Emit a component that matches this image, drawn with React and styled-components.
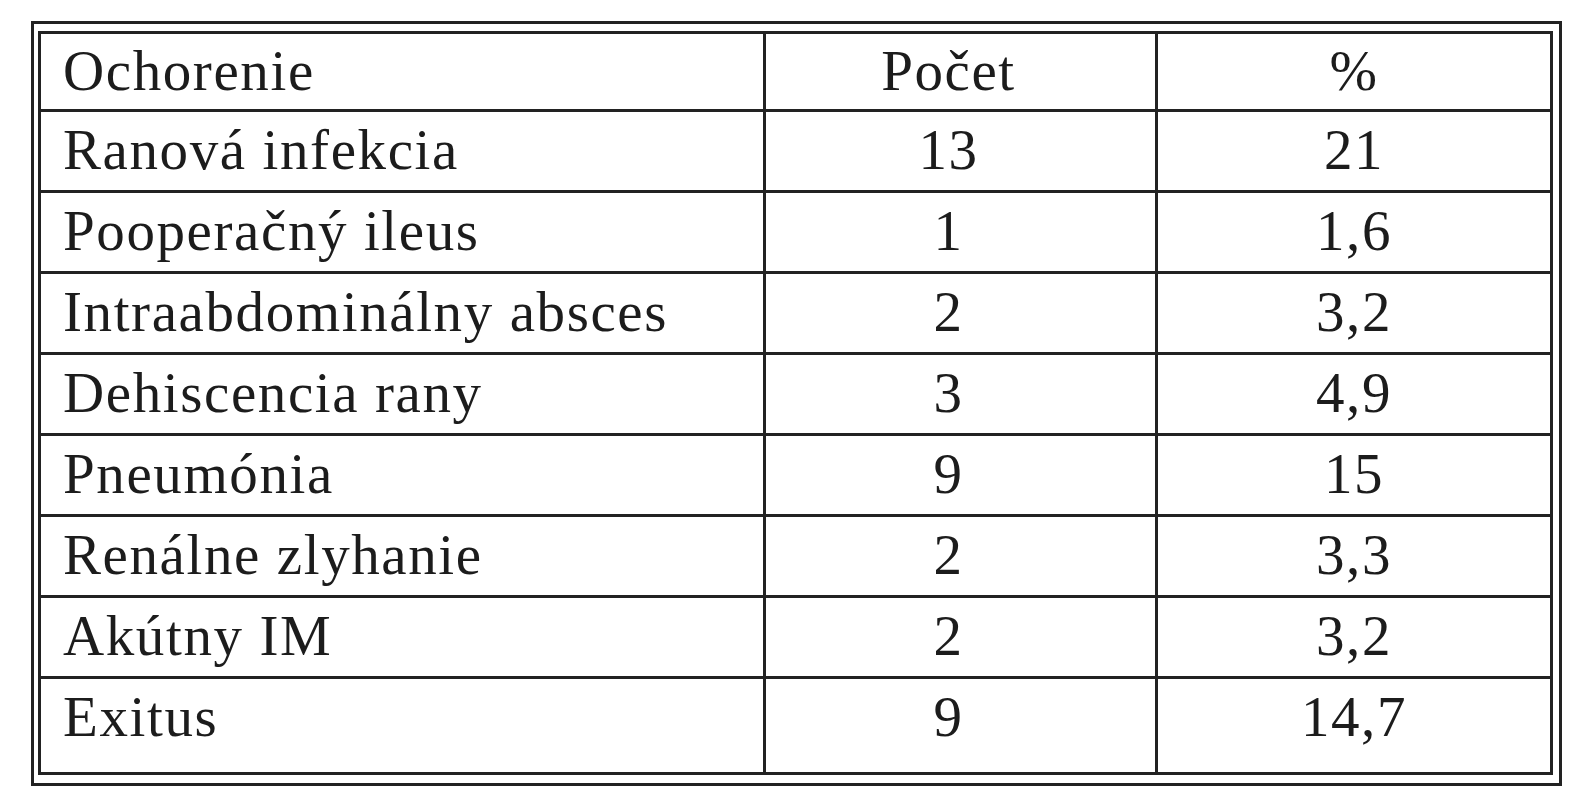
import React from 'react';
import styled, { createGlobalStyle } from 'styled-components';

const rows = [
    { name: 'Ranová infekcia', count: '13', pct: '21' },
    { name: 'Pooperačný ileus', count: '1', pct: '1,6' },
    { name: 'Intraabdominálny absces', count: '2', pct: '3,2' },
    { name: 'Dehiscencia rany', count: '3', pct: '4,9' },
    { name: 'Pneumónia', count: '9', pct: '15' },
    { name: 'Renálne zlyhanie', count: '2', pct: '3,3' },
    { name: 'Akútny IM', count: '2', pct: '3,2' },
    { name: 'Exitus', count: '9', pct: '14,7' },
];

export default function App() {
    return (
        <>
            <GlobalStyle />
            <Frame>
                <Table>
                    <colgroup>
                        <col style={{ width: 725 }} />
                        <col style={{ width: 392 }} />
                        <col style={{ width: 395 }} />
                    </colgroup>
                    <thead>
                        <tr>
                            <Cell head>Ochorenie</Cell>
                            <Cell head center shift>Počet</Cell>
                            <Cell head center>%</Cell>
                        </tr>
                    </thead>
                    <tbody>
                        {rows.map((r, i) => {
                            const last = i === rows.length - 1;
                            return (
                                <tr key={r.name}>
                                    <Cell last={last}>{r.name}</Cell>
                                    <Cell center shift last={last}>{r.count}</Cell>
                                    <Cell center last={last}>{r.pct}</Cell>
                                </tr>
                            );
                        })}
                    </tbody>
                </Table>
            </Frame>
        </>
    );
}

const GlobalStyle = createGlobalStyle`
    body {
        margin: 0;
        background: #fff;
        font-family: "Liberation Serif", "Times New Roman", serif;
        color: #1c1c1c;
    }
`;

const Frame = styled.div`
    box-sizing: border-box;
    width: 1531px;
    margin: 21px 0 0 31px;
    border: 3px solid #222;
    padding: 7px 9px 8px 4px;
`;

const Table = styled.table`
    width: 1512px;
    table-layout: fixed;
    border-collapse: collapse;
    border: 3px solid #222;
`;

const Cell = styled.td`
    border: 3px solid #222;
    padding: 0 ${p => (p.shift ? 24 : 0)}px ${p => (p.last ? 17 : p.head ? 1 : 2)}px ${p => (p.center ? 0 : 22)}px;
    vertical-align: top;
    line-height: ${p => (p.head ? 74 : 76)}px;
    font-size: 57px;
    letter-spacing: 1.6px;
    text-align: ${p => (p.center ? 'center' : 'left')};
    white-space: nowrap;
`;
